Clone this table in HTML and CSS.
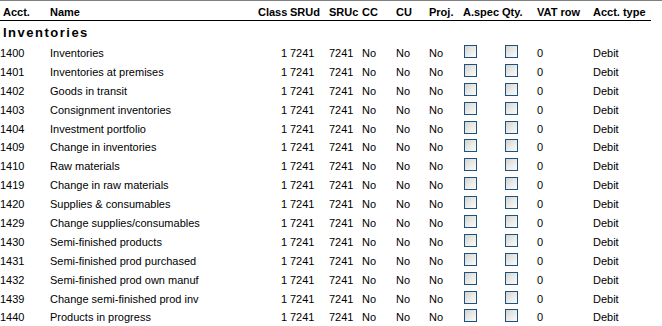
FILE: index.html
```html
<!DOCTYPE html>
<html>
<head>
<meta charset="utf-8">
<link rel="stylesheet" href="styles.css">
</head>
<body>
<div class="list">
  <div class="row head">
    <div class="c acct">Acct.</div><div class="c">Name</div><div class="c">Class</div><div class="c srud">SRUd</div><div class="c">SRUc</div><div class="c">CC</div><div class="c">CU</div><div class="c">Proj.</div><div class="c">A.spec</div><div class="c">Qty.</div><div class="c">VAT row</div><div class="c">Acct. type</div>
  </div>
  <div class="group">Inventories</div>
  <div id="rows"></div>
</div>
<script src="app.js"></script>
</body>
</html>
```
FILE: app.js
```js
const data = [
  ["1400","Inventories"],
  ["1401","Inventories at premises"],
  ["1402","Goods in transit"],
  ["1403","Consignment inventories"],
  ["1404","Investment portfolio"],
  ["1409","Change in inventories"],
  ["1410","Raw materials"],
  ["1419","Change in raw materials"],
  ["1420","Supplies & consumables"],
  ["1429","Change supplies/consumables"],
  ["1430","Semi-finished products"],
  ["1431","Semi-finished prod purchased"],
  ["1432","Semi-finished prod own manuf"],
  ["1439","Change semi-finished prod inv"],
  ["1440","Products in progress"]
];
const wrap = document.getElementById("rows");
for (const [a, n] of data) {
  const r = document.createElement("div");
  r.className = "row item";
  const esc = s => s.replace(/&/g, "&amp;");
  r.innerHTML =
    '<div class="c">' + a + '</div>' +
    '<div class="c">' + esc(n) + '</div>' +
    '<div class="c cls">1</div>' +
    '<div class="c srud">7241</div>' +
    '<div class="c">7241</div>' +
    '<div class="c">No</div>' +
    '<div class="c">No</div>' +
    '<div class="c">No</div>' +
    '<div class="c"><span class="cb cb1"></span></div>' +
    '<div class="c"><span class="cb cb2"></span></div>' +
    '<div class="c">0</div>' +
    '<div class="c">Debit</div>';
  wrap.appendChild(r);
}
```
FILE: styles.css
```css
html, body {
  margin: 0;
  padding: 0;
  background: #fff;
}
body {
  font-family: "Liberation Sans", Arial, sans-serif;
  font-size: 11px;
  color: #000;
}
.list {
  width: 662px;
  border-top: 1px solid #808080;
}
.row {
  display: grid;
  grid-template-columns: 50px 208px 32px 39px 33px 34px 33px 34px 39px 35px 56px 58px;
  width: 651px;
}
.c {
  white-space: nowrap;
  overflow: visible;
}
.head {
  padding-top: 4px;
  line-height: 15px;
  font-weight: bold;
  border-bottom: 1px solid #000;
}
.head .acct {
  padding-left: 3px;
}
.group {
  height: 23px;
  line-height: 23px;
  font-size: 13px;
  font-weight: bold;
  letter-spacing: 1.5px;
  padding-left: 3px;
}
.item {
  line-height: 18.9px;
  height: 18.9px;
}
.item .cls {
  text-align: right;
  padding-right: 3px;
}
.cb {
  display: inline-block;
  box-sizing: border-box;
  width: 13px;
  height: 13px;
  border: 1px solid #1c5180;
  background: linear-gradient(135deg, #d4d4ce 0%, #ebebe8 55%, #fbfbf9 100%);
  vertical-align: -1px;
}
.cb1 {
  margin-left: 1px;
}
.cb2 {
  margin-left: 3px;
}
```
